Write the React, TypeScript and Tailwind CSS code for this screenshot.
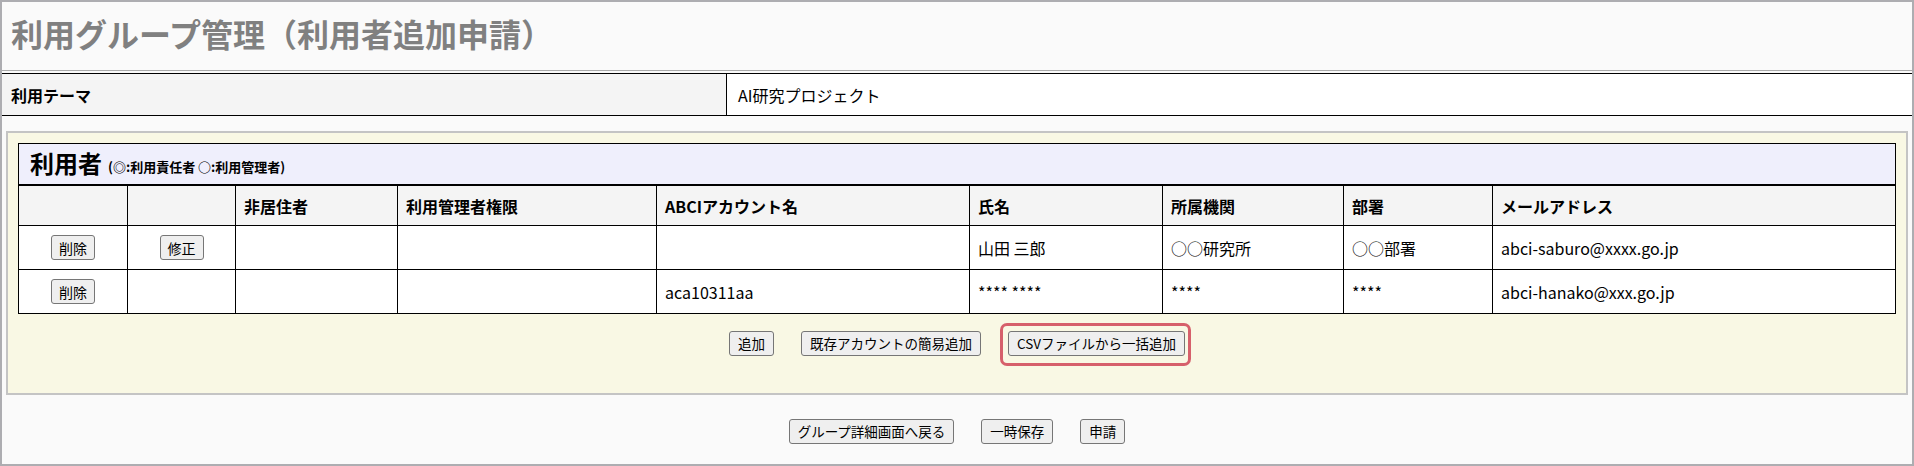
import type { ReactNode } from "react";

const cols = "grid grid-cols-[108px_108px_162px_259px_313px_193px_181px_149px_403px]";

const header = ["", "", "非居住者", "利用管理者権限", "ABCIアカウント名", "氏名", "所属機関", "部署", "メールアドレス"];

function Btn({ children, small }: { children: ReactNode; small?: boolean }) {
  return (
    <button
      type="button"
      className={
        "bg-[#efefef] border border-[#767676] rounded-[3px] text-black leading-none whitespace-nowrap " +
        (small ? "h-[25px] px-[7px] text-[14px]" : "h-[25px] px-[8px] text-[13.5px]")
      }
    >
      {children}
    </button>
  );
}

function Cell({ children, first, center }: { children?: ReactNode; first?: boolean; center?: boolean }) {
  return (
    <div
      className={
        "flex items-center text-[16px] text-black " +
        (first ? "" : "border-l border-black ") +
        (center ? "justify-center" : "pl-[8px]")
      }
    >
      {children}
    </div>
  );
}

export default function App() {
  const rows: (ReactNode | string)[][] = [
    [<Btn small>削除</Btn>, <Btn small>修正</Btn>, "", "", "", "山田 三郎", "○○研究所", "○○部署", "abci-saburo@xxxx.go.jp"],
    [<Btn small>削除</Btn>, "", "", "", "aca10311aa", "**** ****", "****", "****", "abci-hanako@xxx.go.jp"],
  ];

  return (
    <div className="h-[466px] w-[1914px] bg-[#fafafa] border-2 border-[#adadb1] font-['Noto_Sans_CJK_JP',sans-serif] flex flex-col">
      <h1 className="h-[69px] shrink-0 border-b border-[#aaaaaa] pl-[9px] pt-[15px] text-[32px] leading-[32px] font-bold text-[#808080]">
        利用グループ管理（利用者追加申請）
      </h1>

      <div className="mt-[2px] h-[43px] shrink-0 border-y border-black flex">
        <div className="w-[724px] bg-[#f4f4f4] flex items-center pl-[9px] text-[16px] font-bold text-black">利用テーマ</div>
        <div className="flex-1 bg-white border-l border-black flex items-center pl-[11px] text-[16px] text-black">
          AI研究プロジェクト
        </div>
      </div>

      <div className="mt-[15px] mx-[4px] shrink-0 border-2 border-[#c4c4c4] bg-[#f9f8e4] pt-[10px] px-[10px] pb-[37px]">
        <div className="border border-black">
          <div className="h-[42px] bg-[#efeffc] border-b-2 border-black flex items-center pl-[11px] pb-[2px]">
            <span className="text-[24px] font-bold text-black leading-none">利用者</span>
            <span className="ml-[6px] mt-[6px] text-[13px] font-bold text-black leading-none">(◎:利用責任者 ○:利用管理者)</span>
          </div>
          <div className={cols + " h-[39px] bg-[#f4f4f4]"}>
            {header.map((h, i) => (
              <Cell key={i} first={i === 0}>
                <span className="font-bold">{h}</span>
              </Cell>
            ))}
          </div>
          {rows.map((r, ri) => (
            <div key={ri} className={cols + " h-[44px] bg-white border-t border-black"}>
              {r.map((c, i) => (
                <Cell key={i} first={i === 0} center={i < 2}>
                  {c}
                </Cell>
              ))}
            </div>
          ))}
        </div>

        <div className="mt-[17px] flex justify-center gap-[27px]">
          <Btn>追加</Btn>
          <Btn>既存アカウントの簡易追加</Btn>
          <span className="relative inline-flex">
            <Btn>CSVファイルから一括追加</Btn>
            <span className="absolute -top-[8px] -left-[8px] -right-[6px] -bottom-[10px] border-[3px] border-[#d6606b] rounded-[7px] pointer-events-none" />
          </span>
        </div>
      </div>

      <div className="mt-[24px] flex justify-center gap-[27px]">
        <Btn>グループ詳細画面へ戻る</Btn>
        <Btn>一時保存</Btn>
        <Btn>申請</Btn>
      </div>
    </div>
  );
}
